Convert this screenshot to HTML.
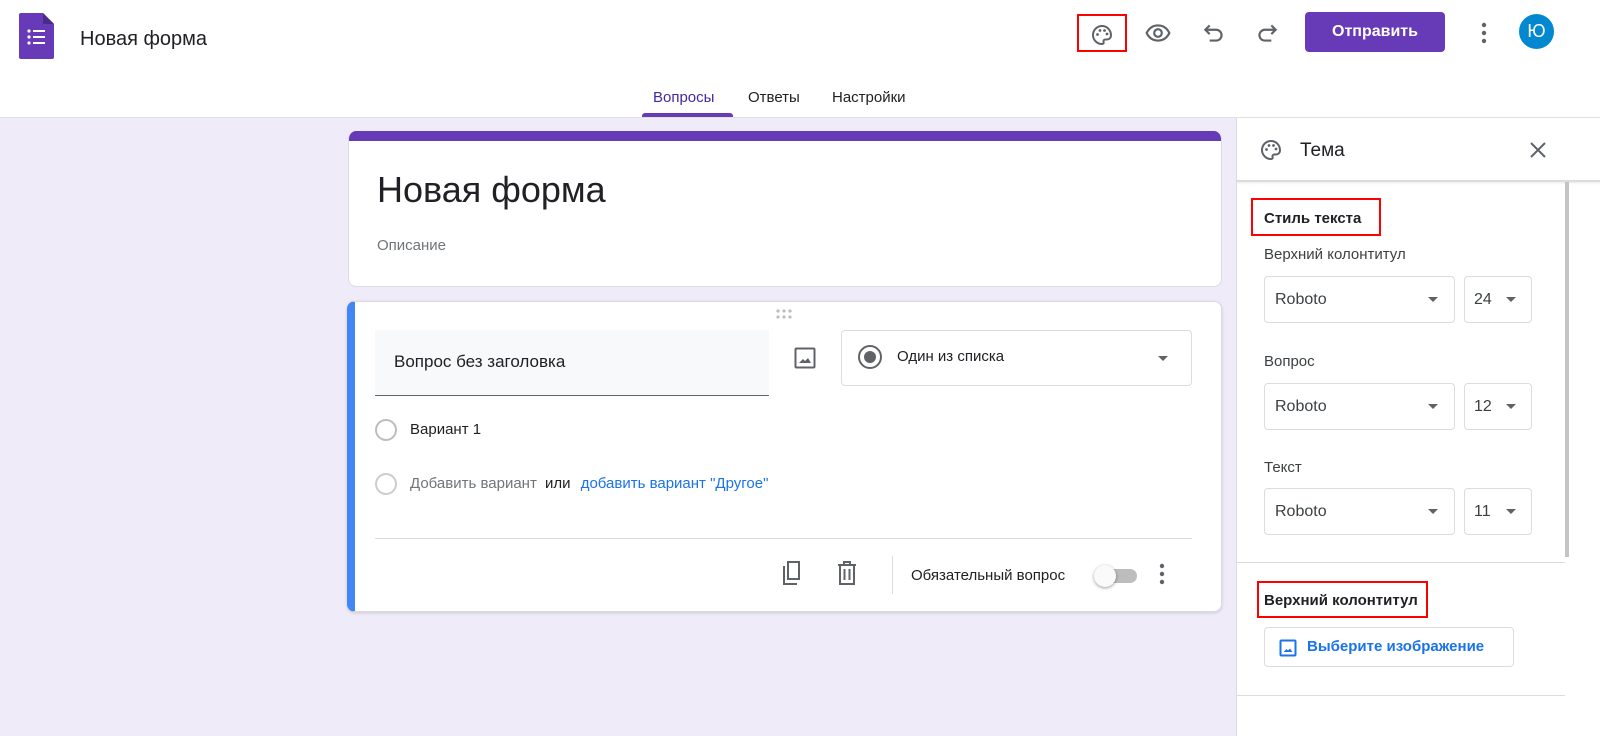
<!DOCTYPE html>
<html><head><meta charset="utf-8"><style>
*{box-sizing:border-box;margin:0;padding:0}
body{width:1600px;height:736px;overflow:hidden;background:#efebf8;font-family:"Liberation Sans",Arial,sans-serif;color:#202124;position:relative}
.abs{position:absolute}
.hdr{position:absolute;left:0;top:0;width:1600px;height:118px;background:#fff;border-bottom:1px solid #e0e0e0}
.card{position:absolute;background:#fff;border:1px solid #dadce0;border-radius:8px}
.sel{position:absolute;border:1px solid #dadce0;border-radius:4px;background:#fff;font-size:16px;color:#3c4043}
.tri{position:absolute;width:0;height:0;border-left:5px solid transparent;border-right:5px solid transparent;border-top:5px solid #5f6368}
.red{position:absolute;border:2px solid #f00}
</style></head><body>
<div class="hdr">
 <svg class="abs" style="left:19px;top:13px" width="35" height="46" viewBox="0 0 35 46"><path d="M2 0h22l11 11v33a2 2 0 0 1-2 2H2a2 2 0 0 1-2-2V2a2 2 0 0 1 2-2z" fill="#673ab7"/><path d="M24 0l11 11H24z" fill="#4a2a8a"/><g fill="#fff"><circle cx="10" cy="18" r="1.6"/><circle cx="10" cy="24" r="1.6"/><circle cx="10" cy="30" r="1.6"/><rect x="14" y="17" width="12" height="2"/><rect x="14" y="23" width="12" height="2"/><rect x="14" y="29" width="12" height="2"/></g></svg>
 <div class="abs" style="left:80px;top:28px;font-size:20px;color:#202124">Новая форма</div>
 <div class="red" style="left:1077px;top:14px;width:50px;height:38px"></div>
 <svg class="abs" style="left:1090px;top:23px" width="24" height="24" viewBox="0 0 24 24"><path d="M12 3a9 9 0 0 0 0 18c1.4 0 2-1 1.6-2-.5-1.2.3-2.5 1.6-2.5H17a4 4 0 0 0 4-4C21 7 17 3 12 3z" fill="none" stroke="#5f6368" stroke-width="2"/><circle cx="7.5" cy="11.5" r="1.4" fill="#5f6368"/><circle cx="10" cy="7.5" r="1.4" fill="#5f6368"/><circle cx="14.5" cy="7.5" r="1.4" fill="#5f6368"/><circle cx="17" cy="11" r="1.4" fill="#5f6368"/></svg>
 <svg class="abs" style="left:1145px;top:20px" width="26" height="26" viewBox="0 0 24 24"><path d="M1.5 12C4 7 8 5 12 5s8 2 10.5 7C20 17 16 19 12 19s-8-2-10.5-7z" fill="none" stroke="#5f6368" stroke-width="2"/><circle cx="12" cy="12" r="3.5" fill="none" stroke="#5f6368" stroke-width="2"/></svg>
 <svg class="abs" style="left:1201px;top:20px" width="26" height="26" viewBox="0 0 24 24"><path d="M8 5L4 9l4 4M4 9h10a5 5 0 0 1 0 10H8" fill="none" stroke="#5f6368" stroke-width="2"/></svg>
 <svg class="abs" style="left:1254px;top:20px" width="26" height="26" viewBox="0 0 24 24"><path d="M16 5l4 4-4 4M20 9H10a5 5 0 0 0 0 10h6" fill="none" stroke="#5f6368" stroke-width="2"/></svg>
 <div class="abs" style="left:1305px;top:12px;width:140px;height:40px;background:#673ab7;border-radius:4px;color:#fff;font-weight:bold;font-size:16px;text-align:center;line-height:40px">Отправить</div>
 <svg class="abs" style="left:1474px;top:20px" width="20" height="26" viewBox="0 0 20 26"><g fill="#5f6368"><circle cx="10" cy="5" r="2.2"/><circle cx="10" cy="13" r="2.2"/><circle cx="10" cy="21" r="2.2"/></g></svg>
 <div class="abs" style="left:1519px;top:14px;width:35px;height:35px;border-radius:50%;background:#0288d1;color:#fff;font-size:18px;text-align:center;line-height:35px">Ю</div>
 <div class="abs" style="left:653px;top:89px;font-size:15px;color:#4527a0">Вопросы</div>
 <div class="abs" style="left:642px;top:113px;width:91px;height:4px;background:#673ab7;border-radius:3px 3px 0 0"></div>
 <div class="abs" style="left:748px;top:89px;font-size:15px;color:#202124">Ответы</div>
 <div class="abs" style="left:832px;top:89px;font-size:15px;color:#202124">Настройки</div>
</div>

<div class="card" style="left:348px;top:131px;width:874px;height:156px;border-top:none;overflow:hidden">
 <div style="height:10px;background:#673ab7"></div>
 <div class="abs" style="left:28px;top:38px;font-size:36px;color:#202124">Новая форма</div>
 <div class="abs" style="left:28px;top:106px;font-size:15px;color:#70757a">Описание</div>
</div>

<div class="card" style="left:347px;top:301px;width:875px;height:311px;border-left:8px solid #4285f4;box-shadow:0 1px 3px rgba(0,0,0,.15)">
 <svg class="abs" style="left:420px;top:6px" width="20" height="14"><g fill="#bdbdbd"><circle cx="3" cy="3" r="1.6"/><circle cx="9" cy="3" r="1.6"/><circle cx="15" cy="3" r="1.6"/><circle cx="3" cy="9" r="1.6"/><circle cx="9" cy="9" r="1.6"/><circle cx="15" cy="9" r="1.6"/></g></svg>
 <div class="abs" style="left:20px;top:28px;width:394px;height:66px;background:#f8f9fa;border-bottom:1px solid #5f6368"></div>
 <div class="abs" style="left:39px;top:50px;font-size:17px;color:#202124">Вопрос без заголовка</div>
 <svg class="abs" style="left:438px;top:44px" width="24" height="24" viewBox="0 0 24 24"><rect x="2.5" y="2.5" width="19" height="19" rx="1" fill="none" stroke="#5f6368" stroke-width="2"/><path d="M6 17l4-4 2 2 3-3 3 5z" fill="#5f6368"/></svg>
 <div class="sel" style="left:486px;top:28px;width:351px;height:56px">
  <div class="abs" style="left:16px;top:14px;width:24px;height:24px;border:2px solid #5f6368;border-radius:50%"></div>
  <div class="abs" style="left:22px;top:20px;width:12px;height:12px;background:#5f6368;border-radius:50%"></div>
  <div class="abs" style="left:55px;top:17px;font-size:15px;color:#202124">Один из списка</div>
  <div class="tri" style="left:316px;top:25px"></div>
 </div>
 <div class="abs" style="left:20px;top:117px;width:22px;height:22px;border:2px solid #bdbdbd;border-radius:50%"></div>
 <div class="abs" style="left:55px;top:119px;font-size:15px;color:#202124">Вариант 1</div>
 <div class="abs" style="left:20px;top:171px;width:22px;height:22px;border:2px solid #ccc;border-radius:50%"></div>
 <div class="abs" style="left:55px;top:173px;font-size:15px;color:#70757a">Добавить вариант <span style="color:#202124;margin-left:4px">или</span> <span style="color:#1a73e8;margin-left:6px">добавить вариант "Другое"</span></div>
 <div class="abs" style="left:20px;top:236px;width:817px;height:1px;background:#dadce0"></div>
 <svg class="abs" style="left:425px;top:258px" width="24" height="26" viewBox="0 0 24 26"><path d="M8 2h11v17H8z" fill="none" stroke="#5f6368" stroke-width="2"/><path d="M4 6v18h13" fill="none" stroke="#5f6368" stroke-width="2"/></svg>
 <svg class="abs" style="left:480px;top:258px" width="24" height="26" viewBox="0 0 24 26"><path d="M3 5h18M9 5V2h6v3M5 5v19h14V5M9.5 9v11M14.5 9v11" fill="none" stroke="#5f6368" stroke-width="2"/></svg>
 <div class="abs" style="left:537px;top:254px;width:1px;height:38px;background:#dadce0"></div>
 <div class="abs" style="left:556px;top:265px;font-size:15px;color:#202124">Обязательный вопрос</div>
 <div class="abs" style="left:744px;top:267px;width:38px;height:14px;border-radius:7px;background:#bdbdbd"></div>
 <div class="abs" style="left:739px;top:263px;width:22px;height:22px;border-radius:50%;background:#fafafa;box-shadow:0 1px 3px rgba(0,0,0,.4)"></div>
 <svg class="abs" style="left:800px;top:260px" width="14" height="26"><g fill="#5f6368"><circle cx="7" cy="4" r="2.2"/><circle cx="7" cy="12" r="2.2"/><circle cx="7" cy="20" r="2.2"/></g></svg>
</div>

<div class="abs" style="left:1236px;top:118px;width:364px;height:618px;background:#fff;border-left:1px solid #dadce0">
 <svg class="abs" style="left:22px;top:20px" width="24" height="24" viewBox="0 0 24 24"><path d="M12 3a9 9 0 0 0 0 18c1.4 0 2-1 1.6-2-.5-1.2.3-2.5 1.6-2.5H17a4 4 0 0 0 4-4C21 7 17 3 12 3z" fill="none" stroke="#5f6368" stroke-width="2"/><circle cx="7.5" cy="11.5" r="1.4" fill="#5f6368"/><circle cx="10" cy="7.5" r="1.4" fill="#5f6368"/><circle cx="14.5" cy="7.5" r="1.4" fill="#5f6368"/><circle cx="17" cy="11" r="1.4" fill="#5f6368"/></svg>
 <div class="abs" style="left:63px;top:22px;font-size:19px;color:#202124">Тема</div>
 <svg class="abs" style="left:291px;top:22px" width="20" height="20" viewBox="0 0 20 20"><path d="M3 3l14 14M17 3L3 17" stroke="#5f6368" stroke-width="2"/></svg>
 <div class="abs" style="left:0;top:62px;width:364px;height:2px;background:#dadce0;box-shadow:0 1px 2px rgba(0,0,0,.1)"></div>
 <div class="abs" style="left:328px;top:64px;width:4px;height:375px;background:#c4c4c4"></div>
 <div class="red" style="left:14px;top:80px;width:130px;height:38px"></div>
 <div class="abs" style="left:27px;top:92px;font-size:15px;font-weight:bold;color:#202124">Стиль текста</div>
 <div class="abs" style="left:27px;top:128px;font-size:15px;color:#3c4043">Верхний колонтитул</div>
 <div class="sel" style="left:27px;top:158px;width:191px;height:47px"><span class="abs" style="left:10px;top:14px">Roboto</span><div class="tri" style="left:163px;top:20px"></div></div>
 <div class="sel" style="left:227px;top:158px;width:68px;height:47px"><span class="abs" style="left:9px;top:14px">24</span><div class="tri" style="left:41px;top:20px"></div></div>
 <div class="abs" style="left:27px;top:235px;font-size:15px;color:#3c4043">Вопрос</div>
 <div class="sel" style="left:27px;top:265px;width:191px;height:47px"><span class="abs" style="left:10px;top:14px">Roboto</span><div class="tri" style="left:163px;top:20px"></div></div>
 <div class="sel" style="left:227px;top:265px;width:68px;height:47px"><span class="abs" style="left:9px;top:14px">12</span><div class="tri" style="left:41px;top:20px"></div></div>
 <div class="abs" style="left:27px;top:341px;font-size:15px;color:#3c4043">Текст</div>
 <div class="sel" style="left:27px;top:370px;width:191px;height:47px"><span class="abs" style="left:10px;top:14px">Roboto</span><div class="tri" style="left:163px;top:20px"></div></div>
 <div class="sel" style="left:227px;top:370px;width:68px;height:47px"><span class="abs" style="left:9px;top:14px">11</span><div class="tri" style="left:41px;top:20px"></div></div>
 <div class="abs" style="left:0;top:444px;width:328px;height:1px;background:#dadce0"></div>
 <div class="red" style="left:20px;top:463px;width:171px;height:37px"></div>
 <div class="abs" style="left:27px;top:474px;font-size:15px;font-weight:bold;color:#202124">Верхний колонтитул</div>
 <div class="sel" style="left:27px;top:509px;width:250px;height:40px">
  <svg class="abs" style="left:14px;top:11px" width="18" height="18" viewBox="0 0 18 18"><rect x="1.5" y="1.5" width="15" height="15" rx="1" fill="none" stroke="#1a73e8" stroke-width="2"/><path d="M4.5 13l3-3 1.5 1.5 2-2 2.5 3.5z" fill="#1a73e8"/></svg>
  <span class="abs" style="left:42px;top:10px;color:#1a73e8;font-weight:bold;font-size:15px">Выберите изображение</span>
 </div>
 <div class="abs" style="left:0;top:577px;width:328px;height:1px;background:#dadce0"></div>
</div>
</body></html>
